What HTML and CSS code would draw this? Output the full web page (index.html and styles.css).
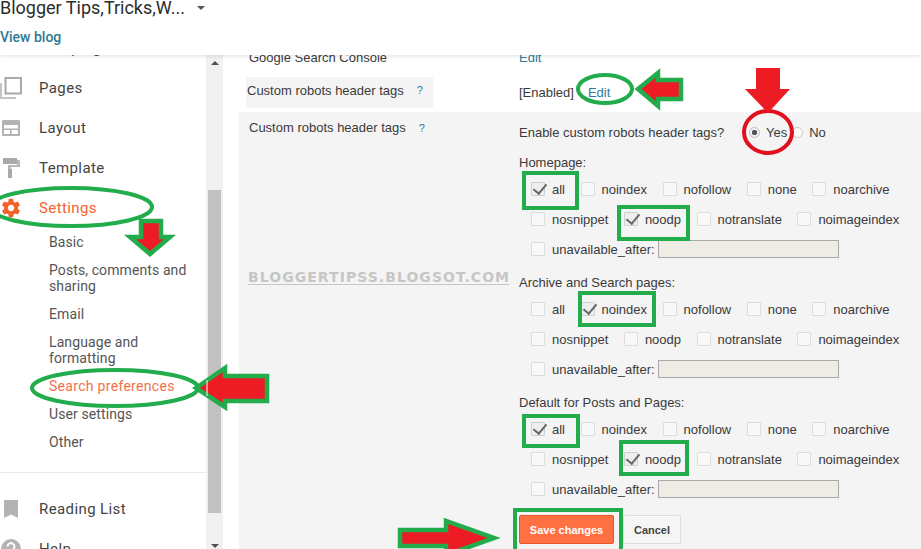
FILE: index.html
```html
<!DOCTYPE html>
<html lang="en">
<head>
<meta charset="utf-8">
<title>Search preferences</title>
<link rel="stylesheet" href="styles.css">
</head>
<body>
<div class="app">
  <header class="header">
    <div class="blog-row"><span class="blog-name">Blogger Tips,Tricks,W...</span><span class="caret"></span></div>
    <a class="view-blog">View blog</a>
  </header>
  <div class="body">
    <aside class="sidebar">
      <nav class="nav">
        <div class="nav-item"><span class="nav-icon"></span><span>Campaigns</span></div>
        <div class="nav-item">
          <svg class="nav-icon" viewBox="0 0 22 22"><path d="M5.500 1h15.500v15.500h-15.500z" fill="none" stroke="#a9a9a9" stroke-width="2"/><path d="M1 6v15h15" fill="none" stroke="#c4c4c4" stroke-width="2"/></svg>
          <span>Pages</span>
        </div>
        <div class="nav-item">
          <svg class="nav-icon" viewBox="0 0 22 22"><path d="M3 3h16a1 1 0 0 1 1 1v14a1 1 0 0 1-1 1H3a1 1 0 0 1-1-1V4a1 1 0 0 1 1-1z" fill="#b3b3b3"/><path d="M4 8h14v3.500H4zM4 13h6v4H4zM11.500 13H18v4h-6.500z" fill="#fff"/></svg>
          <span>Layout</span>
        </div>
        <div class="nav-item">
          <svg class="nav-icon" viewBox="0 0 22 22"><path d="M3 1h14v6H3z" fill="#a9a9a9"/><path d="M17 3h3v7h-9v3H8V8h9z" fill="#b8b8b8"/><path d="M8 12h4v9H8z" fill="#a9a9a9"/></svg>
          <span>Template</span>
        </div>
        <div class="nav-item active">
          <svg class="nav-icon" viewBox="0 0 24 24"><path fill="#f4602c" d="M19.430 12.980c.04-.32.07-.64.07-.98s-.03-.66-.07-.98l2.110-1.650c.19-.15.24-.42.12-.64l-2-3.460c-.12-.22-.39-.3-.61-.22l-2.490 1c-.52-.4-1.080-.73-1.690-.98l-.38-2.650C14.460 2.180 14.250 2 14 2h-4c-.25 0-.46.18-.49.42l-.38 2.650c-.61.25-1.170.59-1.690.98l-2.490-1c-.23-.09-.49 0-.61.22l-2 3.460c-.13.22-.07.49.12.64l2.110 1.650c-.04.32-.07.65-.07.98s.03.66.07.98l-2.110 1.650c-.19.15-.24.42-.12.64l2 3.460c.12.22.39.3.61.22l2.490-1c.52.4 1.080.73 1.690.98l.38 2.650c.03.24.24.42.49.42h4c.25 0 .46-.18.49-.42l.38-2.650c.61-.25 1.170-.59 1.690-.98l2.490 1c.23.09.49 0 .61-.22l2-3.460c.12-.22.07-.49-.12-.64l-2.110-1.650zM12 15.500c-1.930 0-3.500-1.570-3.500-3.500s1.570-3.500 3.500-3.500 3.500 1.570 3.500 3.500-1.570 3.500-3.500 3.500z"/></svg>
          <span>Settings</span>
        </div>
        <ul class="subnav">
          <li>Basic</li>
          <li>Posts, comments and sharing</li>
          <li>Email</li>
          <li>Language and formatting</li>
          <li class="current">Search preferences</li>
          <li>User settings</li>
          <li>Other</li>
        </ul>
        <div class="nav-sep"></div>
        <div class="nav-item">
          <svg class="nav-icon" viewBox="0 0 22 22"><path d="M4 2h14v18l-7-3.500L4 20z" fill="#b3b3b3"/></svg>
          <span>Reading List</span>
        </div>
        <div class="nav-item">
          <svg class="nav-icon" viewBox="0 0 22 22"><circle cx="11" cy="11" r="10" fill="#b3b3b3"/><path d="M7.500 8.500a3.500 3.500 0 1 1 5.500 3c-1.300.9-2 1.400-2 2.500" fill="none" stroke="#fff" stroke-width="2"/></svg>
          <span>Help</span>
        </div>
      </nav>
    </aside>
    <div class="scrollbar">
      <span class="sb-up"></span>
      <span class="sb-thumb"></span>
      <span class="sb-down"></span>
    </div>
    <main class="main">
      <div class="row-plain">
        <span class="label">Google Search Console</span>
        <a class="link">Edit</a>
      </div>
      <div class="row-enabled">
        <div class="label-box"><span>Custom robots header tags</span><span class="help">?</span></div>
        <div class="enabled-value"><span>[Enabled]</span><a class="link">Edit</a></div>
      </div>
      <section class="panel">
        <div class="panel-label"><span>Custom robots header tags</span><span class="help">?</span></div>
        <div class="panel-body">
          <div class="question">
            <span class="question-text">Enable custom robots header tags?</span>
            <span class="radio on"></span><span class="radio-text">Yes</span>
            <span class="radio"></span><span class="radio-text">No</span>
          </div>

          <div class="group">
            <div class="group-title">Homepage:</div>
            <div class="opts">
              <label class="opt"><span class="cb on"></span>all</label>
              <label class="opt"><span class="cb"></span>noindex</label>
              <label class="opt"><span class="cb"></span>nofollow</label>
              <label class="opt"><span class="cb"></span>none</label>
              <label class="opt"><span class="cb"></span>noarchive</label>
            </div>
            <div class="opts">
              <label class="opt"><span class="cb"></span>nosnippet</label>
              <label class="opt"><span class="cb on"></span>noodp</label>
              <label class="opt"><span class="cb"></span>notranslate</label>
              <label class="opt"><span class="cb"></span>noimageindex</label>
            </div>
            <div class="opts">
              <label class="opt opt-date"><span class="cb"></span>unavailable_after:<span class="date"></span></label>
            </div>
          </div>

          <div class="group">
            <div class="group-title">Archive and Search pages:</div>
            <div class="opts">
              <label class="opt"><span class="cb"></span>all</label>
              <label class="opt"><span class="cb on"></span>noindex</label>
              <label class="opt"><span class="cb"></span>nofollow</label>
              <label class="opt"><span class="cb"></span>none</label>
              <label class="opt"><span class="cb"></span>noarchive</label>
            </div>
            <div class="opts">
              <label class="opt"><span class="cb"></span>nosnippet</label>
              <label class="opt"><span class="cb"></span>noodp</label>
              <label class="opt"><span class="cb"></span>notranslate</label>
              <label class="opt"><span class="cb"></span>noimageindex</label>
            </div>
            <div class="opts">
              <label class="opt opt-date"><span class="cb"></span>unavailable_after:<span class="date"></span></label>
            </div>
          </div>

          <div class="group">
            <div class="group-title">Default for Posts and Pages:</div>
            <div class="opts">
              <label class="opt"><span class="cb on"></span>all</label>
              <label class="opt"><span class="cb"></span>noindex</label>
              <label class="opt"><span class="cb"></span>nofollow</label>
              <label class="opt"><span class="cb"></span>none</label>
              <label class="opt"><span class="cb"></span>noarchive</label>
            </div>
            <div class="opts">
              <label class="opt"><span class="cb"></span>nosnippet</label>
              <label class="opt"><span class="cb on"></span>noodp</label>
              <label class="opt"><span class="cb"></span>notranslate</label>
              <label class="opt"><span class="cb"></span>noimageindex</label>
            </div>
            <div class="opts">
              <label class="opt opt-date"><span class="cb"></span>unavailable_after:<span class="date"></span></label>
            </div>
          </div>

          <div class="actions">
            <button class="btn btn-save">Save changes</button>
            <button class="btn btn-cancel">Cancel</button>
          </div>
        </div>
      </section>
    </main>
  </div>

  <div class="watermark">BLOGGERTIPSS.BLOGSOT.COM</div>

  <svg class="marks" width="921" height="549" viewBox="0 0 921 549">
    <g class="green-line">
      <ellipse cx="71" cy="207" rx="81" ry="19"/>
      <ellipse cx="115" cy="388" rx="83" ry="18"/>
      <ellipse cx="605" cy="89" rx="27" ry="14"/>
      <rect x="524" y="173" width="53" height="35"/>
      <rect x="619" y="207" width="69" height="32"/>
      <rect x="580" y="293" width="74" height="32"/>
      <rect x="524" y="416" width="54" height="30"/>
      <rect x="621" y="442" width="66" height="32"/>
      <rect x="515" y="510" width="106" height="44"/>
    </g>
    <ellipse class="red-line" cx="768" cy="132" rx="24" ry="21"/>
    <path class="red-fill" d="M756 68h24v21h10l-22 24-23-24h11z"/>
    <path class="arrow" d="M141 221h20v16h9l-20 17-20-17h11z"/>
    <path class="arrow" d="M196 388l29-20v8h42v25h-42v6z"/>
    <path class="arrow" d="M638 89l20-16v7h23v19h-23v7z"/>
    <path class="arrow" d="M400 530h46v-9l48 17-48 17v-9h-46z"/>
    <path class="sheen" d="M207 380v16"/>
  </svg>
</div>
</body>
</html>
```

FILE: styles.css
```css
* { box-sizing: border-box; }
html, body { margin: 0; padding: 0; background: #fff; }
.app {
  position: relative;
  width: 921px;
  height: 549px;
  overflow: hidden;
  display: flex;
  flex-direction: column;
  font-family: "Liberation Sans", Arial, sans-serif;
  font-size: 13px;
  color: #3a3a3a;
}
.header {
  position: relative;
  z-index: 2;
  flex: none;
  height: 55px;
  background: #fff;
  box-shadow: 0 1px 4px rgba(0, 0, 0, .12);
}
.blog-row {
  display: flex;
  align-items: center;
  height: 16px;
  gap: 12px;
}
.blog-name {
  font-family: Roboto, sans-serif;
  font-size: 18px;
  color: #2c2c2c;
  line-height: 16px;
  white-space: nowrap;
}
.caret {
  width: 0;
  height: 0;
  border-left: 4px solid transparent;
  border-right: 4px solid transparent;
  border-top: 4px solid #555;
}
.view-blog {
  display: block;
  margin-top: 13px;
  font-family: Roboto, sans-serif;
  font-weight: 500;
  font-size: 14px;
  line-height: 16px;
  color: #2b7a94;
}
.body {
  flex: 1;
  min-height: 0;
  display: flex;
  overflow: hidden;
}
.sidebar {
  flex: none;
  width: 206px;
  overflow: hidden;
}
.nav {
  margin-top: -27px;
  font-family: Roboto, sans-serif;
  font-size: 15px;
  color: #444;
  letter-spacing: .4px;
}
.nav-item {
  display: flex;
  align-items: center;
  gap: 17px;
  height: 40px;
}
.nav-icon {
  flex: none;
  width: 22px;
  height: 22px;
}
.nav-item.active { color: #f4602c; }
.subnav {
  list-style: none;
  margin: 0;
  padding: 0 16px 16px 49px;
  font-size: 14px;
  line-height: 16px;
  color: #555;
  letter-spacing: .1px;
}
.subnav li { padding: 6px 0; }
.subnav .current { color: #f4704a; letter-spacing: .3px; }
.nav-sep {
  height: 1px;
  margin-bottom: 16px;
  background: #ebebeb;
}
.scrollbar {
  flex: none;
  width: 17px;
  position: relative;
  display: flex;
  flex-direction: column;
  align-items: center;
  background: #f1f1f1;
}
.sb-up, .sb-down {
  flex: none;
  width: 0;
  height: 0;
  border-left: 4px solid transparent;
  border-right: 4px solid transparent;
}
.sb-up { margin-top: 6px; border-bottom: 4px solid #505050; }
.sb-thumb {
  flex: none;
  width: 13px;
  height: 323px;
  margin-top: 125px;
  background: #c1c1c1;
}
.sb-down { margin-top: 31px; border-top: 4px solid #505050; }
.main {
  flex: 1;
  min-width: 0;
  margin-left: 16px;
  overflow: hidden;
}
.row-plain {
  display: flex;
  margin-top: -5px;
  height: 16px;
  line-height: 16px;
  padding-left: 10px;
}
.label { width: 270px; }
.link { color: #2d7a99; }
.row-enabled {
  display: flex;
  margin-top: 11px;
  height: 31px;
}
.label-box {
  display: flex;
  align-items: center;
  width: 187px;
  height: 31px;
  margin-left: 7px;
  padding: 0 0 5px 1px;
  background: #f4f4f4;
}
.help {
  margin-left: 13px;
  color: #2d7a99;
  font-size: 11px;
}
.enabled-value {
  display: flex;
  align-items: center;
  gap: 14px;
  margin-left: 86px;
}
.panel {
  display: flex;
  margin-top: 4px;
  height: 480px;
  padding-top: 10px;
  background: #f4f4f4;
}
.panel-label {
  flex: none;
  width: 280px;
  padding-left: 10px;
  line-height: 16px;
  margin-top: -2px;
}
.panel-body { flex: 1; }
.question {
  display: flex;
  align-items: center;
  height: 20px;
  margin-bottom: 12px;
}
.question-text { width: 230px; }
.radio {
  width: 11px;
  height: 11px;
  border-radius: 50%;
  border: 1px solid #c9c9c9;
  background: #fafafa;
}
.radio.on {
  background: radial-gradient(circle, #555 0 2.500px, #f2f2f2 3px);
  border-color: #bdbdbd;
}
.radio-text { margin: 0 5px 0 6px; }
.group { margin-bottom: 10px; }
.group-title {
  height: 16px;
  line-height: 18px;
  margin-bottom: 4px;
}
.opts {
  display: flex;
  gap: 15.500px;
  height: 30px;
  padding-left: 12px;
  align-items: center;
}
.opt {
  display: flex;
  align-items: center;
  gap: 7px;
}
.cb {
  position: relative;
  flex: none;
  width: 14px;
  height: 14px;
  border: 1px solid #dcdcdc;
  border-radius: 1px;
  background: #f8f8f8;
}
.cb.on {
  border-color: #cfcfcf;
  background: #eee;
}
.cb.on::after {
  content: "";
  position: absolute;
  left: 4px;
  top: -2px;
  width: 6px;
  height: 11px;
  border-right: 2.500px solid #666;
  border-bottom: 2.500px solid #666;
  transform: rotate(40deg);
}
.date {
  width: 181px;
  height: 18px;
  margin-left: -4px;
  border: 1px solid #a9a9a9;
  background: #eeece4;
}
.actions {
  display: flex;
  gap: 9px;
  margin-top: 11px;
}
.btn {
  height: 29px;
  border-radius: 2px;
  font-family: "Liberation Sans", Arial, sans-serif;
  font-size: 11px;
  font-weight: bold;
  padding: 0;
}
.btn-save {
  width: 95px;
  border: 1px solid #e8542a;
  background: #ff7043;
  color: #fff;
}
.btn-cancel {
  width: 58px;
  border: 1px solid #dcdcdc;
  background: #f6f6f6;
  color: #444;
}
.watermark {
  position: absolute;
  left: 248px;
  top: 270px;
  width: 261px;
  border-bottom: 1px solid #c6c6c6;
  font-family: "DejaVu Sans", sans-serif;
  font-weight: bold;
  font-size: 14px;
  line-height: 14px;
  letter-spacing: 1.050px;
  color: #c6c6c6;
  white-space: nowrap;
}
.marks {
  position: absolute;
  left: 0;
  top: 0;
  z-index: 3;
  pointer-events: none;
}
.green-line { fill: none; stroke: #22ac4c; stroke-width: 4; }
.red-line { fill: none; stroke: #e0101f; stroke-width: 4; }
.red-fill { fill: #ed1c24; }
.arrow { fill: #ed1c24; stroke: #22ac4c; stroke-width: 4.500; }
.sheen { stroke: #fff; stroke-width: 1; }
```
